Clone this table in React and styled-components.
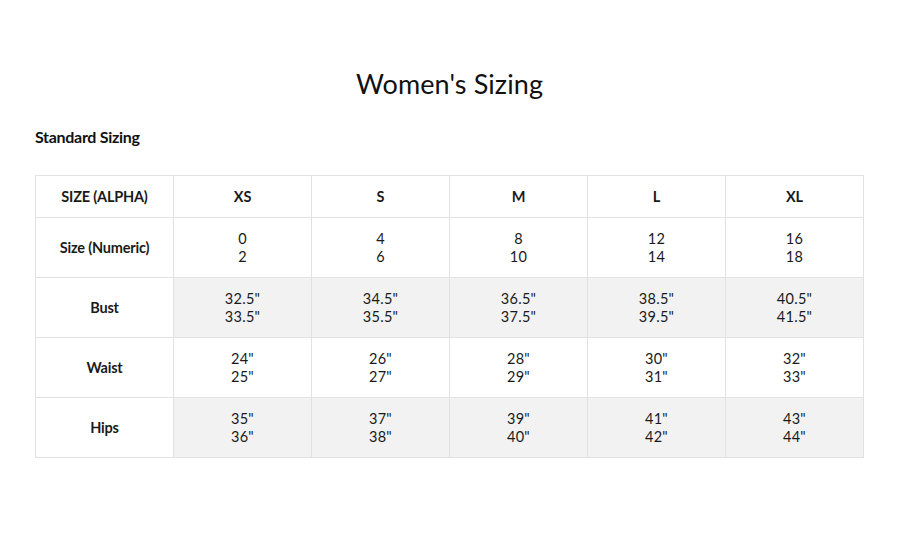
import React from "react";
import styled, { createGlobalStyle } from "styled-components";

const Global = createGlobalStyle`
  html, body { margin: 0; padding: 0; background: #fff; }
  body { font-family: Lato, "Noto Sans", sans-serif; color: #111; }
`;

const Page = styled.div`
  width: 900px;
  height: 540px;
  box-sizing: border-box;
  padding: 65px 36px 0 35px;
  display: flex;
  flex-direction: column;
`;

const Title = styled.h1`
  margin: 0;
  font-weight: 400;
  font-size: 27px;
  line-height: 38px;
  text-align: center;
  color: #111;
  letter-spacing: 0.1px;
`;

const Subtitle = styled.h2`
  margin: 22px 0 0 0;
  font-weight: 700;
  font-size: 16px;
  line-height: 24px;
  letter-spacing: -0.3px;
  color: #111;
`;

const Table = styled.table`
  margin-top: 26px;
  width: 829px;
  border-collapse: collapse;
  table-layout: fixed;
  font-size: 14.5px;
`;

const Cell = styled.td`
  border: 1px solid #e2e2e2;
  text-align: center;
  vertical-align: middle;
  padding: 0;
  height: ${(p) => (p.$head ? "41px" : "59px")};
  background: ${(p) => (p.$shaded ? "#f2f2f2" : "#fff")};
  font-weight: ${(p) => (p.$bold ? 700 : 400)};
  line-height: 18px;
  color: #1a1a1a;
  letter-spacing: ${(p) => (p.$bold ? "-0.2px" : "0.3px")};
`;

const sizes = ["XS", "S", "M", "L", "XL"];
const rows = [
  { label: "Size (Numeric)", vals: [["0", "2"], ["4", "6"], ["8", "10"], ["12", "14"], ["16", "18"]], shaded: false },
  { label: "Bust", vals: [["32.5\"", "33.5\""], ["34.5\"", "35.5\""], ["36.5\"", "37.5\""], ["38.5\"", "39.5\""], ["40.5\"", "41.5\""]], shaded: true },
  { label: "Waist", vals: [["24\"", "25\""], ["26\"", "27\""], ["28\"", "29\""], ["30\"", "31\""], ["32\"", "33\""]], shaded: false },
  { label: "Hips", vals: [["35\"", "36\""], ["37\"", "38\""], ["39\"", "40\""], ["41\"", "42\""], ["43\"", "44\""]], shaded: true },
];

export default function App() {
  return (
    <>
      <Global />
      <Page>
        <Title>Women's Sizing</Title>
        <Subtitle>Standard Sizing</Subtitle>
        <Table>
          <tbody>
            <tr>
              <Cell $head $bold>SIZE (ALPHA)</Cell>
              {sizes.map((s) => (
                <Cell key={s} $head $bold>{s}</Cell>
              ))}
            </tr>
            {rows.map((r) => (
              <tr key={r.label}>
                <Cell $bold>{r.label}</Cell>
                {r.vals.map((v, i) => (
                  <Cell key={i} $shaded={r.shaded}>
                    {v[0]}
                    <br />
                    {v[1]}
                  </Cell>
                ))}
              </tr>
            ))}
          </tbody>
        </Table>
      </Page>
    </>
  );
}
